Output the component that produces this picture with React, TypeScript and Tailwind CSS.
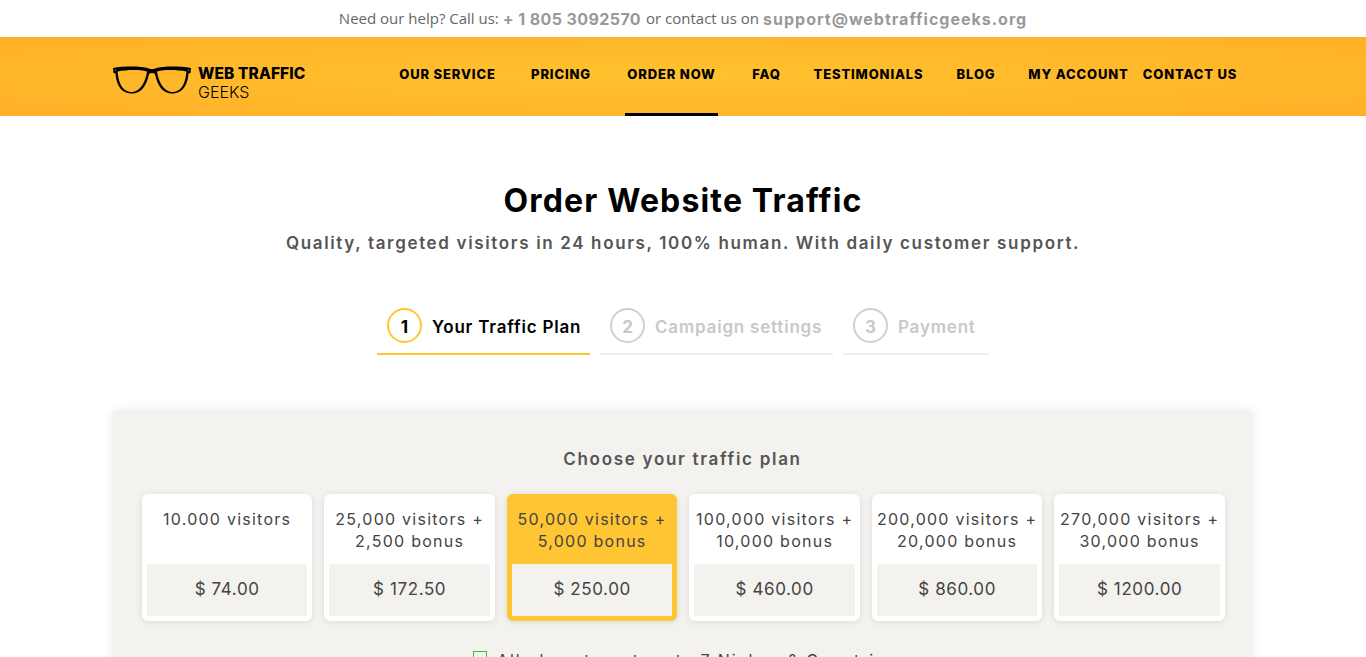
import React from "react";

const navItems = [
  { label: "OUR SERVICE", className: "w-[97px] mr-[35px]" },
  { label: "PRICING", className: "w-[60px] mr-[34px]" },
  { label: "ORDER NOW", className: "w-[93px] mr-[34px]" },
  { label: "FAQ", className: "w-[29px] mr-[34px]" },
  { label: "TESTIMONIALS", className: "w-[107px] mr-[34px]" },
  { label: "BLOG", className: "w-[40px] mr-[34px]" },
  { label: "MY ACCOUNT", className: "w-[97px] mr-[17px]" },
  { label: "CONTACT US", className: "w-[92px]" },
];

const plans = [
  { name: ["10.000 visitors"], price: "$ 74.00" },
  { name: ["25,000 visitors +", "2,500 bonus"], price: "$ 172.50" },
  { name: ["50,000 visitors +", "5,000 bonus"], price: "$ 250.00", selected: true },
  { name: ["100,000 visitors +", "10,000 bonus"], price: "$ 460.00" },
  { name: ["200,000 visitors +", "20,000 bonus"], price: "$ 860.00" },
  { name: ["270,000 visitors +", "30,000 bonus"], price: "$ 1200.00" },
];

const Glasses = () => (
  <svg width="78" height="28" viewBox="0 0 78 28" fill="none" className="shrink-0">
    <path
      d="M0 2C12 0 28 0 36 2.5C38 3.5 40 3.5 42 2.5C50 0 66 0 78 2L77.5 7L75.5 7.5C75 15 72 27 60 27.5C50 28 44.5 20 42 8C40.5 6.5 37.5 6.5 36 8C33.5 20 28 28 18 27.5C6 27 3 15 2.5 7.5L0.5 7Z"
      fill="#000"
    />
    <path d="M4.6 5.6C14 3.6 26 3.6 34 5.4C33 13 28.5 26 18 26C8 25.6 5.2 14 4.6 5.6Z" fill="#FFB629" />
    <path d="M73.4 5.6C64 3.6 52 3.6 44 5.4C45 13 49.5 26 60 26C70 25.6 72.8 14 73.4 5.6Z" fill="#FFB629" />
    <circle cx="2.4" cy="4.2" r="0.8" fill="#777" />
    <circle cx="75.6" cy="4.2" r="0.8" fill="#777" />
  </svg>
);

const Step = ({
  num,
  label,
  active,
  className,
}: {
  num: number;
  label: string;
  active?: boolean;
  className: string;
}) => (
  <div
    className={`flex h-[47px] items-start border-b-2 pl-[10px] ${className} ${
      active ? "border-[#ffc532] text-black" : "border-[#eeeeee] text-[#c8c8c8]"
    }`}
  >
    <span
      className={`flex h-[35px] w-[35px] items-center justify-center rounded-full border-2 pt-[4px] text-[17px] font-bold ${
        active ? "border-[#ffc532]" : "border-[#d0d0d0]"
      }`}
    >
      {num}
    </span>
    <span className="ml-[10px] flex h-[35px] items-center pt-[5px] text-[17px] font-semibold tracking-[0.8px] whitespace-nowrap">
      {label}
    </span>
  </div>
);

export default function App() {
  return (
    <div className="h-[657px] overflow-hidden bg-white font-['Inter',sans-serif]">
      {/* Top bar */}
      <div className="flex h-[37px] items-center justify-center text-[15px] text-[#666666] font-['Open_Sans',sans-serif]">
        <span>Need our help? Call us:</span>
        <span className="ml-[4px] font-['Inter',sans-serif] text-[16px] font-bold tracking-[0.4px] text-[#999999]">+ 1 805 3092570</span>
        <span className="ml-[5px]">or contact us on</span>
        <span className="ml-[4px] font-['Inter',sans-serif] text-[16px] font-bold tracking-[1px] text-[#999999]">support@webtrafficgeeks.org</span>
      </div>

      {/* Header */}
      <header className="flex h-[79px] bg-[radial-gradient(ellipse_at_center,#ffc22d_0%,#ffb028_100%)] pl-[113px]">
        <div className="flex h-full w-[286px] items-start">
          <div className="mt-[29px]">
            <Glasses />
          </div>
          <div className="mt-[27px] ml-[7px] text-black">
            <div className="text-[15.5px] leading-[19px] font-extrabold tracking-[0.1px]">WEB TRAFFIC</div>
            <div className="text-[16px] leading-[19px] font-light">GEEKS</div>
          </div>
        </div>
        <nav className="flex">
          {navItems.map((item) => {
            const active = item.label === "ORDER NOW";
            return (
              <a
                key={item.label}
                className={`flex h-[79px] items-center justify-center border-b-[3px] pb-[1px] whitespace-nowrap text-[13px] font-extrabold tracking-[0.85px] text-black ${item.className} ${
                  active ? "border-black" : "border-transparent"
                }`}
              >
                {item.label}
              </a>
            );
          })}
        </nav>
      </header>

      {/* Title */}
      <main>
        <h1 className="mt-[65px] text-center text-[32px] leading-[40px] font-bold tracking-[1.15px] text-black">
          Order Website Traffic
        </h1>
        <p className="mt-[10px] text-center text-[17px] leading-[24px] font-semibold tracking-[1.65px] text-[#555555]">
          Quality, targeted visitors in 24 hours, 100% human. With daily customer support.
        </p>

        {/* Steps */}
        <div className="mt-[53px] flex justify-center gap-[10px]">
          <Step num={1} label="Your Traffic Plan" active className="w-[213px]" />
          <Step num={2} label="Campaign settings" className="w-[233px]" />
          <Step num={3} label="Payment" className="w-[146px]" />
        </div>

        {/* Plans */}
        <section className="mt-[55px] ml-[112px] h-[300px] w-[1141px] rounded-[6px] bg-[#f3f2ee] pt-[36px] shadow-[0_0_12px_rgba(0,0,0,0.08)]">
          <h2 className="text-center text-[17px] leading-[26px] font-semibold tracking-[1.7px] text-[#555555]">
            Choose your traffic plan
          </h2>
          <div className="mt-[22px] ml-[29.9px] grid w-[1083px] grid-cols-6 gap-[12px]">
            {plans.map((plan) => (
              <div
                key={plan.price}
                className={`h-[127px] rounded-[6px] border-[5px] shadow-[0_1px_6px_rgba(0,0,0,0.1)] ${
                  plan.selected ? "border-[#ffc532] bg-[#ffc532]" : "border-white bg-white"
                }`}
              >
                <div className="flex h-[65px] flex-col items-center pt-[9px] text-[16px] leading-[22px] tracking-[1.25px] whitespace-nowrap text-[#444444]">
                  {plan.name.map((line) => (
                    <span key={line}>{line}</span>
                  ))}
                </div>
                <div className="flex h-[52px] items-center justify-center bg-[#f3f2ee] text-[17px] tracking-[0.6px] text-[#444444]">
                  {plan.price}
                </div>
              </div>
            ))}
          </div>
          <label className="mt-[29px] ml-[361px] flex items-start text-[16px] tracking-[1.88px] whitespace-nowrap text-[#444444]">
            <span className="mt-[1px] h-[14px] w-[14px] shrink-0 border border-[#33cc33]" />
            <span className="ml-[10px] leading-[20px]">All plans target up to 7 Niches &amp; Countries</span>
          </label>
        </section>
      </main>
    </div>
  );
}
